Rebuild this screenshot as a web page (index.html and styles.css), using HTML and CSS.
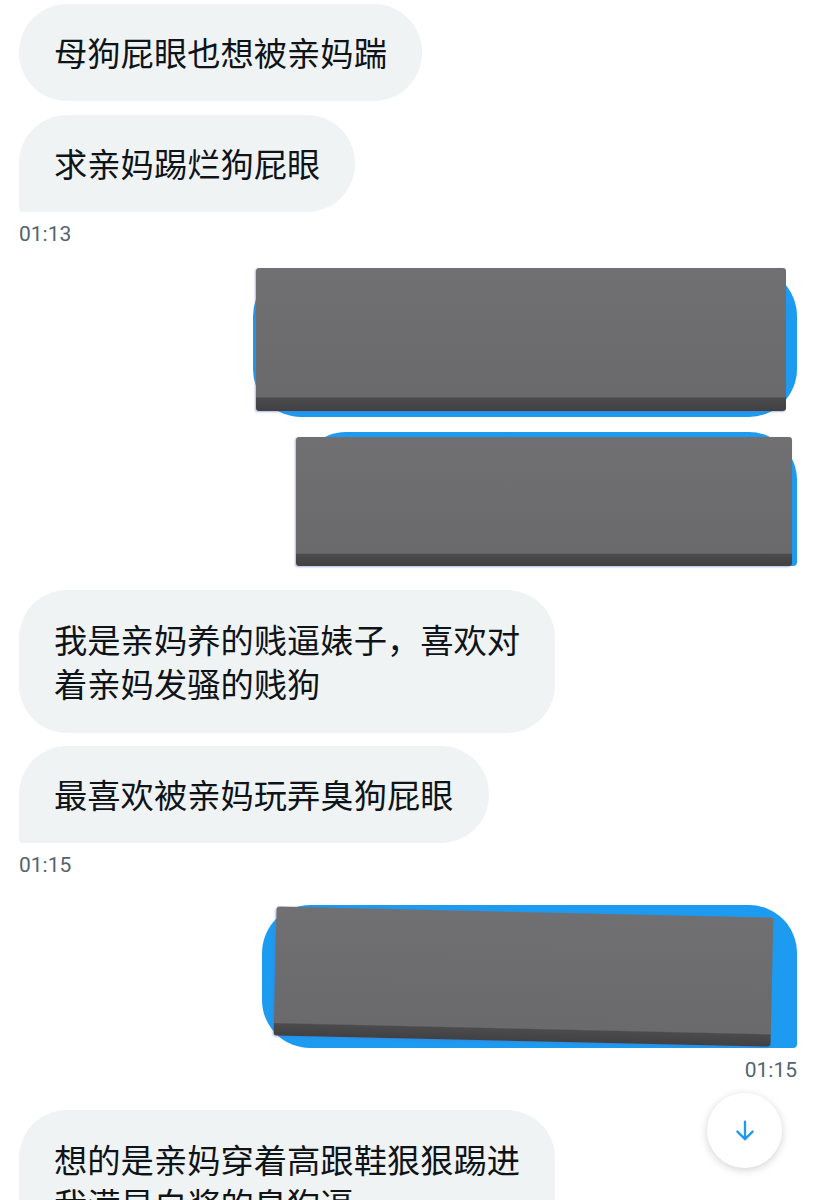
FILE: index.html
```html
<!DOCTYPE html>
<html lang="zh-CN">
  <head>
    <meta charset="UTF-8" />
    <meta name="viewport" content="width=device-width, initial-scale=1.0" />
    <title>Messages</title>
    <link rel="stylesheet" href="styles.css">
  </head>

  <body>
    <div class="thread">
      <div class="row in first">
        <div class="bubble">母狗屁眼也想被亲妈踹</div>
      </div>
      <div class="row in">
        <div class="bubble last">求亲妈踢烂狗屁眼</div>
      </div>
      <div class="time">01:13</div>

      <div class="row out group-top">
        <div class="bubble blue b1">
          <div class="cover c1"></div>
        </div>
      </div>
      <div class="row out">
        <div class="bubble blue last b2">
          <div class="cover c2"></div>
        </div>
      </div>

      <div class="row in group-top">
        <div class="bubble two">我是亲妈养的贱逼婊子，喜欢对<br />着亲妈发骚的贱狗</div>
      </div>
      <div class="row in">
        <div class="bubble last">最喜欢被亲妈玩弄臭狗屁眼</div>
      </div>
      <div class="time">01:15</div>

      <div class="row out group-top late">
        <div class="bubble blue last b3">
          <div class="cover c3"></div>
        </div>
      </div>
      <div class="time right">01:15</div>

      <div class="row in group-top">
        <div class="bubble two">想的是亲妈穿着高跟鞋狠狠踢进<br />我满是白浆的臭狗逼</div>
      </div>
    </div>

    <button class="scroll-down" aria-label="Scroll down">
      <svg width="28" height="28" viewBox="0 0 24 24">
        <path d="M12 4v15M5.5 12.5 12 19l6.5-6.5" fill="none" stroke="#1d9bf0" stroke-width="2" stroke-linecap="round" stroke-linejoin="round"/>
      </svg>
    </button>
  </body>
</html>
```

FILE: styles.css
```css
body {
  margin: 0;
  background: #fff;
  font-family: "Noto Sans CJK SC", "Noto Sans", sans-serif;
  color: #0f1419;
  height: 1200px;
  overflow: hidden;
}

.thread {
  display: flex;
  flex-direction: column;
  padding: 4px 19px 0 19px;
}

.row {
  display: flex;
  margin-top: 14px;
}
.row.first {
  margin-top: 0;
}
.row.out {
  justify-content: flex-end;
}
.row.out + .row.out {
  margin-top: 15px;
}
.row.out + .row.in {
  margin-top: 24px;
}
.row.in + .row.in {
  margin-top: 13px;
}
.row.in.first + .row.in {
  margin-top: 14px;
}

.bubble {
  position: relative;
  background: #eff3f4;
  border-radius: 48px;
  padding: 26px 35px 27px 35px;
  font-size: 33.3px;
  line-height: 44px;
  white-space: nowrap;
}
.bubble.two {
  padding: 27px 35px 28px 35px;
}
.row.in .bubble.last {
  border-bottom-left-radius: 4px;
}
.bubble.blue {
  background: #1d9bf0;
  padding: 0;
}
.row.out .bubble.last {
  border-bottom-right-radius: 4px;
}

.b1 {
  width: 544px;
  height: 149px;
}
.b2 {
  width: 499px;
  height: 134px;
}
.b3 {
  width: 535px;
  height: 143px;
}

/* grey blocks pasted over the sent messages */
.cover {
  position: absolute;
  border-radius: 3px;
  background: linear-gradient(to bottom, #707072 0%, #6a6a6c 90%, #4b4b4d 91%, #414143 100%);
  box-shadow: -1px 1px 2px rgba(90, 110, 200, 0.5);
}
.c1 {
  left: 3px;
  top: 0;
  width: 530px;
  height: 143px;
}
.c2 {
  left: -2px;
  top: 5px;
  width: 496px;
  height: 129px;
}
.c3 {
  left: 13px;
  top: 7px;
  width: 497px;
  height: 129px;
  transform: rotate(1.3deg);
}

.time {
  font-family: Roboto, "Liberation Sans", sans-serif;
  font-size: 21px;
  line-height: 28px;
  color: #536471;
  margin-top: 8px;
}
.time.right {
  text-align: right;
}
.time + .row.out {
  margin-top: 20px;
}
.time + .row.out.late {
  margin-top: 26px;
}
.time.right + .row.in {
  margin-top: 26px;
}

.scroll-down {
  position: absolute;
  left: 707px;
  top: 1093px;
  width: 75px;
  height: 75px;
  border-radius: 50%;
  border: none;
  background: #fff;
  box-shadow: 0 2px 8px rgba(0, 0, 0, 0.18);
  display: flex;
  align-items: center;
  justify-content: center;
  padding: 0;
}
```
